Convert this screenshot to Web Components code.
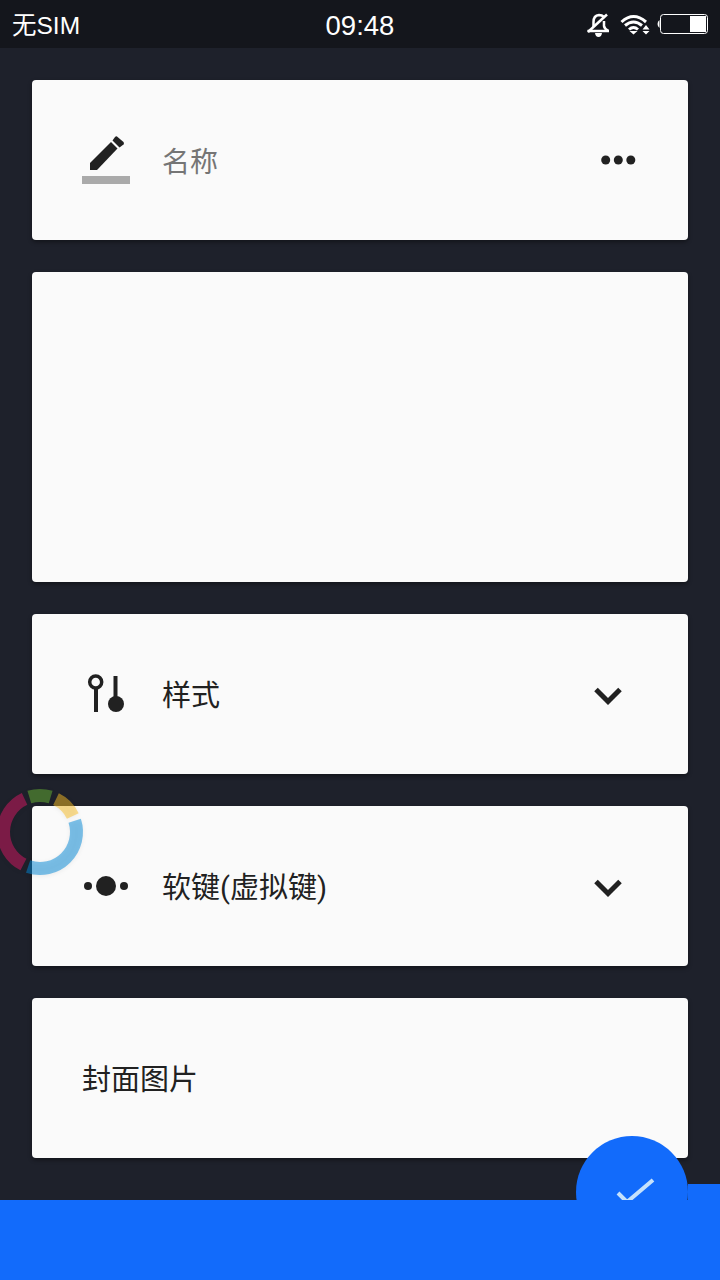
<!DOCTYPE html>
<html>
<head>
<meta charset="utf-8">
<style>
  html, body { margin: 0; padding: 0; height: 100%; }
  body { background: #1e212b; font-family: Roboto, "Noto Sans CJK SC", sans-serif; }
</style>
</head>
<body>
<app-screen>
  <status-bar slot="status"></status-bar>
  <form-card hint>
    <svg slot="icon" width="48" height="48" viewBox="0 0 48 48" fill="#212121"><path d="M8 34 L8 27 L29 6 L35.500 12.500 L15 34Z"/><path d="M30.500 4.500 L33 1 Q34 0 35 .5 L41.500 6 Q42.500 7 41.500 8.500 L37.500 11.500Z"/><rect y="40" width="48" height="8" fill="#aaaaaa"/></svg>
    <span style="color:#757575;font-size:28px">名称</span>
    <svg slot="end" width="35" height="10" viewBox="0 0 35 10" fill="#212121" style="margin-right:2px"><circle cx="4.700" cy="5" r="4.500"/><circle cx="17.300" cy="5" r="4.500"/><circle cx="29.800" cy="5" r="4.500"/></svg>
  </form-card>
  <form-card tall></form-card>
  <form-card>
    <svg slot="icon" width="48" height="48" viewBox="0 -6 48 48" fill="#212121"><circle cx="13.700" cy="6" r="6" fill="none" stroke="#212121" stroke-width="3.500"/><rect x="12" y="11" width="4" height="25"/><rect x="31.500" y="0" width="4" height="24"/><circle cx="34" cy="28" r="8"/></svg>
    <span>样式</span>
    <chevron-icon slot="end"></chevron-icon>
  </form-card>
  <form-card>
    <svg slot="icon" width="48" height="48" viewBox="0 0 48 48" fill="#212121"><circle cx="6" cy="24" r="4"/><circle cx="24" cy="24" r="10"/><circle cx="42" cy="24" r="4"/></svg>
    <span>软键(虚拟键)</span>
    <chevron-icon slot="end"></chevron-icon>
  </form-card>
  <form-card>
    <span>封面图片</span>
  </form-card>
  <done-fab slot="overlay"></done-fab>
  <loading-ring slot="overlay"></loading-ring>
  <bottom-bar slot="bottom"></bottom-bar>
</app-screen>

<script>
class AppScreen extends HTMLElement {
    connectedCallback() {
        const shadowRoot = this.attachShadow({mode: 'open'});
        shadowRoot.innerHTML = `<style>
          :host{
            display: flex;
            flex-direction: column;
            position: relative;
            width: 720px;
            height: 1280px;
            overflow: hidden;
            background: #1e212b;
          }
          main{
            flex: 1;
            display: flex;
            flex-direction: column;
            gap: 32px;
            padding: 32px;
            min-height: 0;
          }
        </style>
        <slot name="status"></slot>
        <main><slot></slot></main>
        <slot name="overlay"></slot>
        <slot name="bottom"></slot>`;
    }
}
customElements.define('app-screen', AppScreen);

class StatusBar extends HTMLElement {
    connectedCallback() {
        const shadowRoot = this.attachShadow({mode: 'open'});
        shadowRoot.innerHTML = `<style>
          :host{
            display: grid;
            grid-template-columns: 1fr auto 1fr;
            align-items: center;
            height: 48px;
            padding: 0 12px;
            box-sizing: border-box;
            background: #14161c;
            color: #fff;
            font-family: "Liberation Sans", "Noto Sans CJK SC", sans-serif;
          }
          .carrier{ font-size: 24.500px; line-height: 28px; padding-top: 4px; }
          .time{ font-size: 27.500px; padding-top: 4px; }
          .right{ display: flex; justify-content: flex-end; align-items: center; }
          svg{ display: block; }
        </style>
        <span class="carrier">无SIM</span>
        <span class="time">09:48</span>
        <div class="right">
          <svg width="24" height="26" viewBox="0 -1 24 26" fill="none" stroke="#fff" stroke-width="2.500"><path d="M7.500 15 V10 Q7.500 3.500 13 3 Q16 3 18 5"/><path d="M18 9 V14 Q18.500 17 22.500 19"/><path d="M1.500 19 H23"/><path d="M2 20 L21 2.500"/><path fill="#fff" stroke="none" d="M9 21 H16 Q15.500 25 12.500 25 Q9.500 25 9 21Z"/></svg>
          <svg style="margin-left:10px" width="30" height="24" viewBox="0 0 30 24" fill="none" stroke="#fff" stroke-width="3"><path d="M1.500 10 Q13.500 -1 26 10"/><path d="M5 13.500 Q13.500 6.500 22 13.500"/><path d="M9 17.500 Q13.500 13.500 18 17.500"/><path fill="#fff" stroke="none" d="M9.500 19 L17.500 19 L13.500 22.500Z M22.500 17.500 L29.500 17.500 L26 13Z M22.500 19 L29.500 19 L26 22.500Z"/></svg>
          <svg style="margin-left:7px" width="51" height="20" viewBox="0 0 51 20"><path fill="#fff" d="M2.500 6 L2.500 14 Q.5 12.500.5 10 Q.5 7.500 2.500 6Z"/><rect x="3.500" y=".5" width="47" height="19" rx="3" fill="none" stroke="#fff"/><rect x="33" y="2" width="16" height="16" fill="#fff"/></svg>
        </div>`;
    }
}
customElements.define('status-bar', StatusBar);

class FormCard extends HTMLElement {
    connectedCallback() {
        const shadowRoot = this.attachShadow({mode: 'open'});
        shadowRoot.innerHTML = `<style>
          :host{
            display: flex;
            align-items: center;
            flex: none;
            height: 160px;
            padding: 0 50px;
            box-sizing: border-box;
            background: #fafafa;
            border-radius: 4px;
            box-shadow: 0 2px 4px rgba(0,0,0,.4);
            color: #212121;
            font-size: 29px;
          }
          :host([tall]){ height: 310px; }
          .icon{ display: flex; }
          .icon slot::slotted(svg){ display: block; margin-right: 32px; }
          .text{ flex: 1; padding-bottom: 2px; }
          :host([hint]) .text{ padding-bottom: 0; }
          .end{ display: flex; }
        </style>
        <div class="icon"><slot name="icon"></slot></div>
        <div class="text"><slot></slot></div>
        <div class="end"><slot name="end"></slot></div>`;
    }
}
customElements.define('form-card', FormCard);

class ChevronIcon extends HTMLElement {
    connectedCallback() {
        const shadowRoot = this.attachShadow({mode: 'open'});
        shadowRoot.innerHTML = `<style>
          :host{ display: block; margin: 4px 15px 0 0; height: 20px; }
          svg{ display: block; }
        </style>
        <svg width="30" height="20" viewBox="0 0 30 20"><path fill="none" stroke="#212121" stroke-width="5" d="M3 3.500 L15 15.500 L27 3.500"/></svg>`;
    }
}
customElements.define('chevron-icon', ChevronIcon);

class DoneFab extends HTMLElement {
    connectedCallback() {
        const shadowRoot = this.attachShadow({mode: 'open'});
        shadowRoot.innerHTML = `<style>
          :host{
            position: absolute;
            left: 576px;
            top: 1136px;
            width: 112px;
            height: 112px;
            border-radius: 50%;
            background: #126bfb;
          }
          svg{ display: block; position: absolute; left: 36px; top: 36px; }
        </style>
        <svg width="44" height="44" viewBox="0 0 44 44"><path fill="none" stroke="#c5e1fb" stroke-width="4" d="M6 21 L15 30 L41 8"/></svg>`;
    }
}
customElements.define('done-fab', DoneFab);

class BottomBar extends HTMLElement {
    connectedCallback() {
        const shadowRoot = this.attachShadow({mode: 'open'});
        shadowRoot.innerHTML = `<style>
          :host{
            display: block;
            position: relative;
            flex: none;
            height: 80px;
            background: #126bfb;
          }
          .corner{
            position: absolute;
            right: 0;
            top: -16px;
            width: 32px;
            height: 16px;
            background: #126bfb;
          }
        </style>
        <div class="corner"></div>`;
    }
}
customElements.define('bottom-bar', BottomBar);

class LoadingRing extends HTMLElement {
    connectedCallback() {
        const shadowRoot = this.attachShadow({mode: 'open'});
        shadowRoot.innerHTML = `<style>
          :host{
            position: absolute;
            left: -4px;
            top: 788px;
            width: 88px;
            height: 88px;
          }
          svg{ display: block; overflow: visible; filter: drop-shadow(0 1px 2px rgba(0,0,0,.12)); }
        </style>
        <svg width="88" height="88" viewBox="-44 -44 88 88" fill="none" stroke-width="13">
          <path stroke="rgba(218,24,100,.5)" d="${arc(36.5, 207, 335)}"/>
          <path stroke="rgba(104,182,52,.5)" d="${arc(36.5, 343, 377)}"/>
          <path stroke="rgba(250,190,36,.5)" d="${arc(36.5, 386, 424)}"/>
          <path stroke="rgba(0,136,216,.5)" d="${arc(36.5, 432, 559)}"/>
        </svg>`;
    }
}
// degrees clockwise from the top
function arc(r, from, to) {
    const pt = a => {
        const t = a * Math.PI / 180;
        return (r * Math.sin(t)).toFixed(2) + ' ' + (-r * Math.cos(t)).toFixed(2);
    };
    return `M${pt(from)} A${r} ${r} 0 ${to - from > 180 ? 1 : 0} 1 ${pt(to)}`;
}
customElements.define('loading-ring', LoadingRing);
</script>
</body>
</html>
